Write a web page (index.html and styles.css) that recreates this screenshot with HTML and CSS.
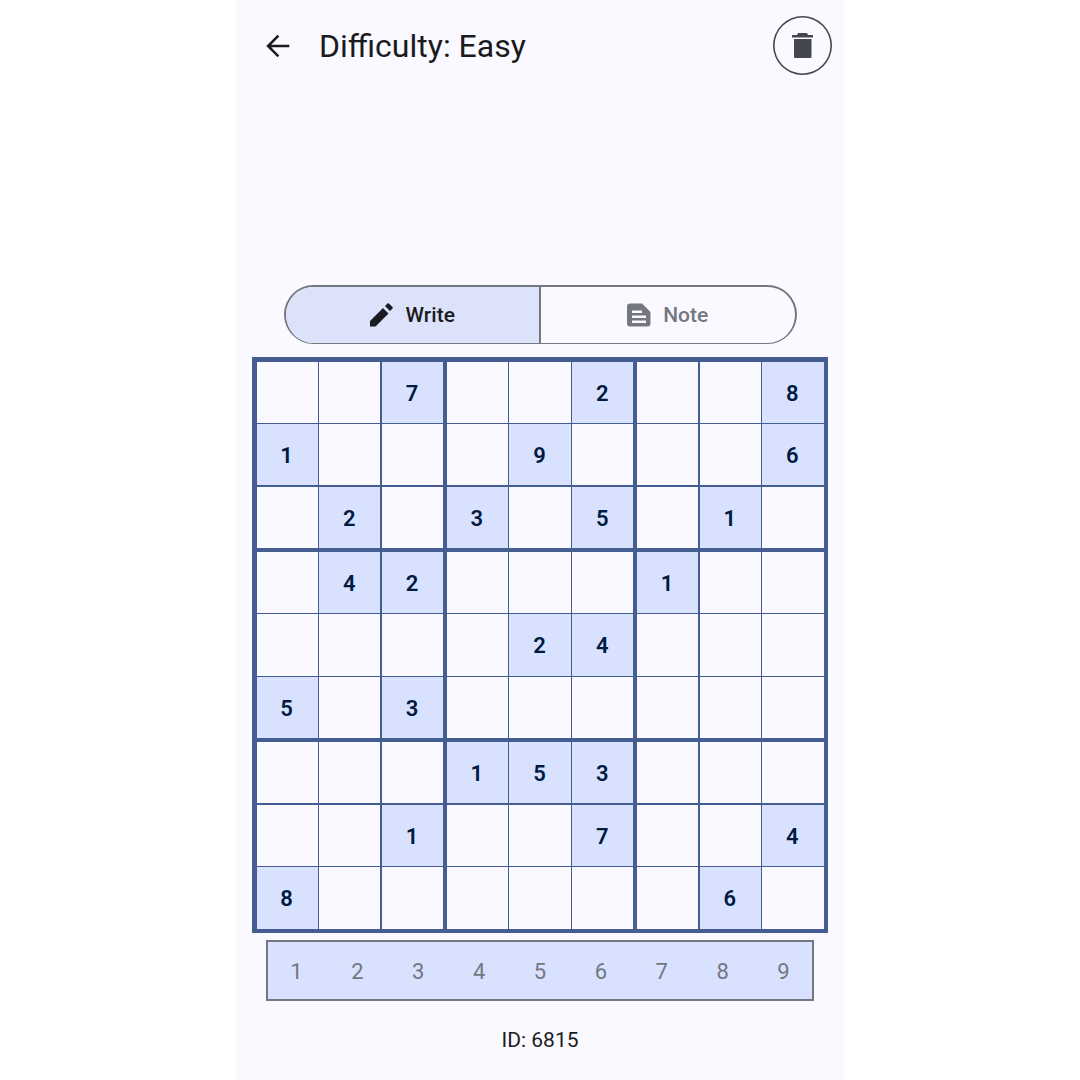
FILE: index.html
```html
<!DOCTYPE html>
<html lang="en">
<head>
    <meta charset="UTF-8">
    <title>Sudoku</title>
    <link rel="stylesheet" href="styles.css">
</head>
<body>
    <div class="phone">
        <header class="topbar">
            <svg class="back" viewBox="0 0 24 24"><path d="M20 12H5.500M12.300 4.700 5 12l7.300 7.300"/></svg>
            <h1 class="title">Difficulty: Easy</h1>
            <div class="trash">
                <svg viewBox="0 0 21 25"><path d="M0 2h5l1-2h9l1 2h5v2.500H0zM2 6h17.500v18a1 1 0 0 1-1 1H3a1 1 0 0 1-1-1z"/></svg>
            </div>
        </header>

        <div class="mode">
            <div class="seg seg-on">
                <svg viewBox="0 0 24 24"><path d="M0 23.500v-5.500L13 5l5.500 5.500-13 13zM15 3l2.500-2.500a1 1 0 0 1 1.400 0l3.600 3.600a1 1 0 0 1 0 1.400L20 8z"/></svg>
                <span>Write</span>
            </div>
            <div class="seg seg-off">
                <svg viewBox="0 0 24 24"><path fill-rule="evenodd" d="M3 .500h12l8.500 8.500v11.500a3 3 0 0 1-3 3H3a3 3 0 0 1-3-3v-17a3 3 0 0 1 3-3zM5 7.500V10h10V7.500zM5 12.500V15h14v-2.500zM5 17.500V20h14v-2.500z"/></svg>
                <span>Note</span>
            </div>
        </div>

        <div class="board">
            <div class="box">
                <div class="cell"></div><div class="cell"></div><div class="cell given">7</div>
                <div class="cell given">1</div><div class="cell"></div><div class="cell"></div>
                <div class="cell"></div><div class="cell given">2</div><div class="cell"></div>
            </div>
            <div class="box">
                <div class="cell"></div><div class="cell"></div><div class="cell given">2</div>
                <div class="cell"></div><div class="cell given">9</div><div class="cell"></div>
                <div class="cell given">3</div><div class="cell"></div><div class="cell given">5</div>
            </div>
            <div class="box">
                <div class="cell"></div><div class="cell"></div><div class="cell given">8</div>
                <div class="cell"></div><div class="cell"></div><div class="cell given">6</div>
                <div class="cell"></div><div class="cell given">1</div><div class="cell"></div>
            </div>
            <div class="box">
                <div class="cell"></div><div class="cell given">4</div><div class="cell given">2</div>
                <div class="cell"></div><div class="cell"></div><div class="cell"></div>
                <div class="cell given">5</div><div class="cell"></div><div class="cell given">3</div>
            </div>
            <div class="box">
                <div class="cell"></div><div class="cell"></div><div class="cell"></div>
                <div class="cell"></div><div class="cell given">2</div><div class="cell given">4</div>
                <div class="cell"></div><div class="cell"></div><div class="cell"></div>
            </div>
            <div class="box">
                <div class="cell given">1</div><div class="cell"></div><div class="cell"></div>
                <div class="cell"></div><div class="cell"></div><div class="cell"></div>
                <div class="cell"></div><div class="cell"></div><div class="cell"></div>
            </div>
            <div class="box">
                <div class="cell"></div><div class="cell"></div><div class="cell"></div>
                <div class="cell"></div><div class="cell"></div><div class="cell given">1</div>
                <div class="cell given">8</div><div class="cell"></div><div class="cell"></div>
            </div>
            <div class="box">
                <div class="cell given">1</div><div class="cell given">5</div><div class="cell given">3</div>
                <div class="cell"></div><div class="cell"></div><div class="cell given">7</div>
                <div class="cell"></div><div class="cell"></div><div class="cell"></div>
            </div>
            <div class="box">
                <div class="cell"></div><div class="cell"></div><div class="cell"></div>
                <div class="cell"></div><div class="cell"></div><div class="cell given">4</div>
                <div class="cell"></div><div class="cell given">6</div><div class="cell"></div>
            </div>
        </div>

        <div class="keys">
            <span>1</span><span>2</span><span>3</span><span>4</span><span>5</span><span>6</span><span>7</span><span>8</span><span>9</span>
        </div>

        <p class="puzzle-id">ID: 6815</p>
    </div>
</body>
</html>
```

FILE: styles.css
```css
*{
    box-sizing: border-box;
}
body{
    margin: 0;
    background-color: #FFFFFF;
    font-family: Roboto, "Liberation Sans", sans-serif;
}
.phone{
    width: 608px;
    height: 1080px;
    margin: 0 auto;
    background-color: #FAF9FF;
    display: flex;
    flex-direction: column;
    align-items: center;
    overflow: hidden;
}
.topbar{
    width: 100%;
    height: 91px;
    display: flex;
    align-items: center;
    padding-left: 25px;
    padding-right: 12px;
}
.back{
    width: 34px;
    height: 34px;
    fill: none;
    stroke: #1A1B20;
    stroke-width: 1.8;
}
.title{
    margin: 0 0 0 24px;
    font-size: 32px;
    line-height: 40px;
    font-weight: 400;
    color: #1A1B20;
    flex: 1;
}
.trash{
    width: 59px;
    height: 59px;
    border-radius: 50%;
    box-shadow: inset 0 0 0 1.6px #44474F;
    display: flex;
    align-items: center;
    justify-content: center;
}
.trash svg{
    width: 21px;
    height: 25px;
    fill: #44474F;
}
.mode{
    width: 513px;
    height: 59px;
    margin-top: 194px;
    border-style: solid;
    border-color: #74777F;
    border-width: 2px 2px 1px 2px;
    border-radius: 30px;
    display: flex;
    overflow: hidden;
}
.seg{
    flex: 1;
    display: flex;
    align-items: center;
    justify-content: center;
    gap: 12px;
    font-size: 21px;
    font-weight: 500;
}
.seg svg{
    width: 24px;
    height: 24px;
}
.seg-on{
    background-color: #DBE2F9;
    color: #1A1B20;
    fill: #1A1B20;
    border-right: 2px solid #74777F;
}
.seg-off{
    color: #74777F;
    fill: #74777F;
}
.board{
    width: 576px;
    height: 576px;
    margin-top: 13px;
    padding: 4.5px;
    background-color: #445E91;
    display: grid;
    grid-template-columns: repeat(3, 1fr);
    grid-template-rows: repeat(3, 1fr);
    gap: 3.5px;
}
.box{
    display: grid;
    grid-template-columns: repeat(3, 1fr);
    grid-template-rows: repeat(3, 1fr);
    gap: 1.4px;
}
.cell{
    background-color: #FAF9FF;
    display: flex;
    align-items: center;
    justify-content: center;
    padding: 2px 1px 0 0;
    font-size: 22px;
    font-weight: 600;
    color: #001A41;
}
.given{
    background-color: #D8E2FF;
}
.keys{
    width: 548px;
    height: 61px;
    margin-top: 7px;
    padding-top: 1px;
    background-color: #D8E2FF;
    box-shadow: inset 0 0 0 2px #74777F;
    display: grid;
    grid-template-columns: repeat(9, 1fr);
    align-items: center;
    text-align: center;
    font-size: 22px;
    color: #74777F;
}
.puzzle-id{
    margin: 27px 0 0;
    font-size: 21px;
    line-height: 24px;
    font-weight: 400;
    color: #1A1B20;
}
```
